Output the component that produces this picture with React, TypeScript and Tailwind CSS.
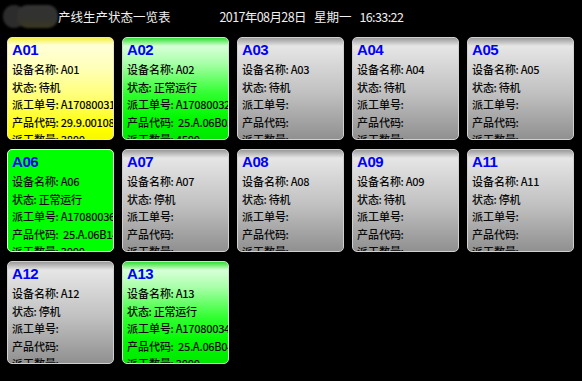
import React from "react";

type Kind = "yellow" | "greenGrad" | "green" | "gray";

interface Item {
  id: string;
  kind: Kind;
  status: string;
  order?: string;
  code?: string;
  qty?: string;
}

const items: Item[] = [
  { id: "A01", kind: "yellow", status: "待机", order: "A17080031", code: "29.9.001089", qty: "3800" },
  { id: "A02", kind: "greenGrad", status: "正常运行", order: "A17080032", code: " 25.A.06B03", qty: "4500" },
  { id: "A03", kind: "gray", status: "待机" },
  { id: "A04", kind: "gray", status: "待机" },
  { id: "A05", kind: "gray", status: "待机" },
  { id: "A06", kind: "green", status: "正常运行", order: "A17080036", code: " 25.A.06B14", qty: "3000" },
  { id: "A07", kind: "gray", status: "停机" },
  { id: "A08", kind: "gray", status: "待机" },
  { id: "A09", kind: "gray", status: "待机" },
  { id: "A11", kind: "gray", status: "停机" },
  { id: "A12", kind: "gray", status: "停机" },
  { id: "A13", kind: "greenGrad", status: "正常运行", order: "A17080034", code: " 25.A.06B04", qty: "3000" },
];

const bgClass: Record<Kind, string> = {
  yellow:
    "bg-[linear-gradient(to_bottom,#f4f040_0%,#ffffd8_7%,#ffffb8_30%,#ffff70_60%,#ffff00_90%,#f8f800_100%)] border-[#e8e8c0]",
  greenGrad:
    "bg-[linear-gradient(to_bottom,#30e030_0%,#d8ffd8_8%,#a8ffa8_25%,#30ff30_55%,#00f800_80%,#00e800_100%)] border-[#d0e0d0]",
  green: "bg-[#00ff00] border-[#e8f8e8]",
  gray:
    "bg-[linear-gradient(to_bottom,#9a9a9a_0%,#e6e6e6_8%,#d8d8d8_25%,#c0c0c0_55%,#a0a0a0_85%,#909090_100%)] border-[#d0d0d0]",
};

function Line({ label, value }: { label: string; value?: string }) {
  return (
    <div className="flex h-[17.5px] whitespace-pre text-[11px] font-medium leading-[17.5px] text-[#0a0a0a]">
      <span>{label}</span>
      <span className="-ml-[0.5px]">:</span>
      {value ? <span className="ml-[2px] tracking-[-0.3px]">{value}</span> : null}
    </div>
  );
}

function Card({ it }: { it: Item }) {
  return (
    <div
      className={`h-[103px] w-[107px] overflow-hidden rounded-[5px] border ${bgClass[it.kind]} pl-[4px] pt-[1px]`}
    >
      <div
        className="h-[22px] text-[15px] font-bold leading-[22px] tracking-[-0.4px] text-[#0000ff]"
        style={{ fontFamily: '"Liberation Sans", Arial, sans-serif' }}
      >
        {it.id}
      </div>
      <Line label="设备名称" value={it.id} />
      <Line label="状态" value={it.status} />
      <Line label="派工单号" value={it.order} />
      <Line label="产品代码" value={it.code} />
      <Line label="派工数量" value={it.qty} />
    </div>
  );
}

export default function App() {
  return (
    <div
      className="h-[381px] w-[582px] overflow-hidden bg-black"
      style={{ fontFamily: '"Noto Sans CJK SC", "Noto Sans", sans-serif' }}
    >
      <div className="flex h-[37px] items-center pb-[4px]">
        <div className="relative ml-[3px] h-[23px] w-[55px]">
          <div className="absolute left-0 top-0 h-[23px] w-[22px] rounded-full bg-[#2c2c2c] blur-[1px]" />
          <div className="absolute left-[14px] top-0 h-[23px] w-[41px] rounded-[10px] bg-[linear-gradient(to_bottom,#333333_0%,#323230_55%,#3a3822_100%)] blur-[1px]" />
        </div>
        <div className="text-[12.5px] leading-[16px] text-[#f0f0f0]">产线生产状态一览表</div>
        <div className="ml-[49px] flex whitespace-pre text-[12.5px] leading-[16px] text-[#f0f0f0]">
          <span className="tracking-[-0.6px]">2017年08月28日</span>
          <span className="ml-[8px]">星期一</span>
          <span className="ml-[8px] tracking-[-0.6px]">16:33:22</span>
        </div>
      </div>
      <div className="grid grid-cols-[repeat(5,107px)] gap-x-[8px] gap-y-[9px] pl-[7px]">
        {items.map((it) => (
          <Card key={it.id} it={it} />
        ))}
      </div>
    </div>
  );
}
